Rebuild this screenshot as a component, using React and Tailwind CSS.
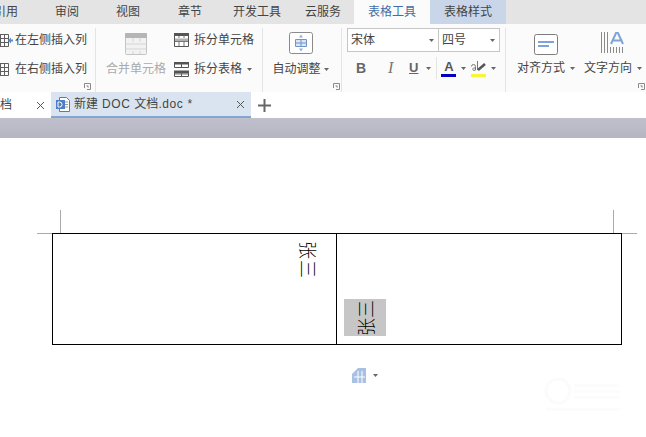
const FONT = "font-['Liberation_Sans','Noto_Sans_CJK_SC',sans-serif]";

const Caret = ({ className = '' }) => (
  <svg width="5" height="3" viewBox="0 0 5 3" className={`shrink-0 ${className}`}>
    <path d="M0 0h5L2.5 3z" fill="#666" />
  </svg>
);

const Launcher = () => (
  <svg width="7" height="7" viewBox="0 0 7 7" className="absolute right-[1px] bottom-[2px]">
    <path d="M.5 5V.5H6.500V6.500H3" fill="none" stroke="#8a8a8a" />
    <path d="M2 2.500h2.500V5z" fill="#8a8a8a" />
  </svg>
);

const Divider = ({ className = '' }) => <div className={`w-px h-[64px] bg-[#e4e4e4] shrink-0 ${className}`} />;

const TopTab = ({ w, children, className = 'text-[#444]' }) => (
  <div className={`h-full flex items-center justify-center shrink-0 text-[12px] ${className}`} style={{ width: w }}>
    {children}
  </div>
);

const GridIcon = ({ side }) => (
  <svg width="18" height="15" viewBox="0 0 18 15" className="shrink-0">
    <g fill="none" stroke="#5f5f5f">
      <path d="M.5 1.500h12v12H.5zM4.500 1.500v12M8.500 1.500v12M.5 5.500h12M.5 9.500h12" />
    </g>
    {side === 'left' && <path d="M12 7.500l3-3v2h2v2h-2v2z" fill="#5b8bc9" />}
  </svg>
);

const SplitCell = () => (
  <svg width="15" height="14" viewBox="0 0 15 14">
    <path d="M.5.5h14v13H.5z" fill="#fff" stroke="#555" />
    <path d="M0 0h15v3H0z" fill="#555" />
    <path d="M1 5.500h13v3H1z" fill="#b0b0b0" />
    <path d="M5 3v2M10 3v2M5 9v4M10 9v4M1 8.500h13" stroke="#777" />
  </svg>
);

const SplitTable = () => (
  <svg width="15" height="15" viewBox="0 0 15 15">
    <path d="M.5.5h14v5H.5zM.5 9.500h14v5H.5z" fill="#fff" stroke="#555" />
    <path d="M0 0h15v2H0zM0 9h15v2H0zM7.500 0v5M7.500 9v6" stroke="#555" fill="#555" />
    <path d="M1 12h13" stroke="#777" />
  </svg>
);

const MergeIcon = () => (
  <svg width="22" height="22" viewBox="0 0 22 22">
    <rect x=".5" y=".5" width="21" height="21" rx="1" fill="#f2f2f2" stroke="#c4c4c4" />
    <path d="M0 1a1 1 0 011-1h20a1 1 0 011 1v4H0z" fill="#b5b5b5" />
    <path d="M1 11h20M1 16h20M8 5v4M15 5v4M8 18v3M15 18v3" stroke="#d4d4d4" />
  </svg>
);

const AutoFitIcon = () => (
  <svg width="24" height="22" viewBox="0 0 24 22">
    <rect x=".5" y=".5" width="23" height="21" rx="2" fill="#fff" stroke="#8a8a8a" />
    <path d="M6.500 7.500h11v7h-11zM12 7.500v7M6.500 11h11" fill="#dbe6f5" stroke="#6f94c8" />
    <path d="M12 2.500l2 3h-4zM12 19.500l2-3h-4z" fill="#8fb0dc" />
  </svg>
);

const AlignIcon = () => (
  <svg width="24" height="21" viewBox="0 0 24 21">
    <rect x=".5" y=".5" width="23" height="20" rx="2" fill="#fff" stroke="#7d7d7d" />
    <path d="M4 8h16M4 12h11" stroke="#7ea3da" strokeWidth="2" />
  </svg>
);

const TextDirIcon = () => (
  <svg width="24" height="22" viewBox="0 0 24 22">
    <path d="M.5 0v21M3.500 0v21M6.500 0v21M9.500 15v6M12.500 15v6M15.500 15v6M18.500 15v6M21.500 15v6" stroke="#8a8a8a" />
    <path d="M10 12L15.500 0h1L22 12M12 8.500h8.500" fill="none" stroke="#7ea3da" strokeWidth="2" />
  </svg>
);

const DocIcon = () => (
  <svg width="14" height="15" viewBox="0 0 14 15" className="shrink-0">
    <path d="M3.500.5h7l3 3v11h-10z" fill="#fff" stroke="#777" />
    <path d="M9 5h3M9 7.500h3M9 10h3" stroke="#999" />
    <rect x="0" y="3" width="9" height="9" fill="#4f7fc4" />
    <path d="M2 5v5h1.500a2 2 0 000-5z" fill="none" stroke="#fff" />
  </svg>
);

const CloseX = () => (
  <svg width="9" height="9" viewBox="0 0 9 9">
    <path d="M1 1l7 7M8 1L1 8" stroke="#555" />
  </svg>
);

export default function App() {
  return (
    <div className={`w-[646px] h-[437px] overflow-hidden bg-white flex flex-col ${FONT}`}>
      {/* menu tabs */}
      <div className="h-[24px] bg-[#e4e4e4] flex items-center shrink-0 -ml-[6px]">
        <TopTab w={24}>引用</TopTab>
        <div className="w-[19px]" />
        <TopTab w={60}>审阅</TopTab>
        <TopTab w={62}>视图</TopTab>
        <TopTab w={62}>章节</TopTab>
        <TopTab w={72}>开发工具</TopTab>
        <TopTab w={60}>云服务</TopTab>
        <div className="w-[1px]" />
        <TopTab w={76} className="bg-[#fbfbfb] text-[#3f6ea8]">表格工具</TopTab>
        <TopTab w={76} className="bg-[#c9d5e8] text-[#444]">表格样式</TopTab>
      </div>

      {/* ribbon */}
      <div className="h-[68px] bg-[#fbfbfb] flex shrink-0 text-[12px] text-[#444] pt-[4px]">
        <div className="relative w-[95px] h-[64px] shrink-0 pl-[15px] flex flex-col pt-[4px] gap-[13px]">
          <div className="flex items-center h-[16px] relative">
            <div className="absolute -left-[19px]"><GridIcon side="left" /></div>
            在左侧插入列
          </div>
          <div className="flex items-center h-[16px] relative">
            <div className="absolute -left-[19px]"><GridIcon /></div>
            在右侧插入列
          </div>
          <div className="absolute right-[3px] bottom-0 w-[7px] h-[9px]"><Launcher /></div>
        </div>
        <Divider />

        <div className="w-[166px] shrink-0 flex">
          <div className="w-[78px] flex flex-col items-center pl-[2px] pt-[5px] text-[#aaa]">
            <MergeIcon />
            <div className="mt-[5px] whitespace-nowrap">合并单元格</div>
          </div>
          <div className="flex flex-col pt-[3px] gap-[11px]">
            <div className="flex items-center gap-[5px] h-[18px] whitespace-nowrap"><SplitCell />拆分单元格</div>
            <div className="flex items-center gap-[5px] h-[18px] whitespace-nowrap">
              <SplitTable />拆分表格<Caret />
            </div>
          </div>
        </div>
        <Divider />

        <div className="relative w-[78px] shrink-0 h-[64px] flex flex-col items-center pt-[4px] pr-[3px]">
          <AutoFitIcon />
          <div className="mt-[6px] flex items-center gap-[3px] whitespace-nowrap">自动调整<Caret /></div>
          <Launcher />
        </div>
        <Divider />

        <div className="w-[163px] shrink-0 flex flex-col pl-[5px]">
          <div className="w-[153px] h-[24px] border border-[#c6c6c6] bg-white flex items-center">
            <div className="w-[91px] h-full flex items-center justify-between pl-[3px] pr-[4px] border-r border-[#c6c6c6]">
              宋体<Caret />
            </div>
            <div className="flex-1 flex items-center justify-between pl-[3px] pr-[4px]">四号<Caret /></div>
          </div>
          <div className="flex items-center h-[24px] mt-[4px]">
            <span className="w-[32px] ml-[9px] font-bold text-[14px] text-[#666]">B</span>
            <span className="w-[21px] italic text-[16px] text-[#777] font-['Liberation_Serif',serif]">I</span>
            <span className="underline font-bold text-[13px] text-[#666]">U</span>
            <Caret className="ml-[8px]" />
            <div className="w-px h-[22px] bg-[#e4e4e4] ml-[5px]" />
            <div className="flex flex-col items-center ml-[4px] w-[15px]">
              <span className="font-bold text-[13px] leading-[13px] text-[#555]">A</span>
              <div className="w-[15px] h-[3px] bg-[#0000c0] mt-[1px]" />
            </div>
            <Caret className="ml-[5px]" />
            <div className="flex flex-col items-center ml-[5px] w-[15px]">
              <svg width="15" height="13" viewBox="0 0 15 13">
                <path d="M4.500 10V6.500a2 2 0 00-4 0M4.500 8H2.500a1.500 1.500 0 000 2.500l2-.5" fill="none" stroke="#777" />
                <path d="M6.500 1v9" stroke="#777" />
                <path d="M7 10l7-6" stroke="#555" strokeWidth="2.500" />
              </svg>
              <div className="w-[15px] h-[3px] bg-[#f5f53c] mt-[1px]" />
            </div>
            <Caret className="ml-[5px]" />
          </div>
        </div>
        <Divider />

        <div className="relative flex-1 h-[64px] flex">
          <div className="w-[78px] flex flex-col items-center pl-[11px] pr-[9px] pt-[6px] shrink-0">
            <AlignIcon />
            <div className="mt-[4px] flex items-center gap-[5px] whitespace-nowrap">对齐方式<Caret /></div>
          </div>
          <div className="w-[58px] flex flex-col items-center pt-[4px] shrink-0">
            <TextDirIcon />
            <div className="mt-[5px] flex items-center gap-[5px] whitespace-nowrap">文字方向<Caret /></div>
          </div>
          <Launcher />
        </div>
      </div>

      {/* document tabs */}
      <div className="h-[26px] bg-white flex shrink-0 text-[12px] text-[#444]">
        <div className="w-[51px] flex items-center justify-between pr-[6px]">
          <span>档</span><CloseX />
        </div>
        <div className="w-[200px] h-full bg-[#dae4f1] border-b-2 border-[#84a5d2] flex items-center pl-[5px] pr-[6px]">
          <DocIcon />
          <span className="ml-[4px] flex-1 whitespace-nowrap">
            新建<span className="tracking-[0.6px]"> DOC </span>文档<span className="tracking-[0.6px]">.doc *</span>
          </span>
          <CloseX />
        </div>
        <div className="ml-[7px] flex items-center">
          <svg width="13" height="13" viewBox="0 0 13 13"><path d="M6.500 0v13M0 6.500h13" stroke="#666" strokeWidth="2" /></svg>
        </div>
      </div>

      {/* gray band above the page */}
      <div className="h-[20px] shrink-0 bg-gradient-to-b from-[#bfc0cb] to-[#b4b5c0]" />

      {/* page */}
      <div className="relative flex-1 bg-white pt-[95px] pl-[52px]">
        <div className="absolute left-[60px] top-[72px] w-px h-[23px] bg-[#aaa]" />
        <div className="absolute left-[37px] top-[95px] w-[15px] h-px bg-[#aaa]" />
        <div className="absolute left-[613px] top-[72px] w-px h-[23px] bg-[#aaa]" />
        <div className="absolute left-[622px] top-[95px] w-[15px] h-px bg-[#aaa]" />

        <div className="w-[570px] h-[112px] border border-black flex">
          <div className="w-[284px] border-r border-black flex justify-end pr-[18px] pt-[7px] shrink-0">
            <div className="w-[18px] h-[38px] flex items-center justify-center">
              <span className="rotate-90 whitespace-nowrap text-[18px] tracking-[1px] leading-none text-black font-light font-['Noto_Sans_CJK_SC',sans-serif]">张三</span>
            </div>
          </div>
          <div className="flex-1 flex items-end pl-[7px] pb-[8px]">
            <div className="w-[42px] h-[37px] bg-[#c6c6c6] flex items-center justify-center">
              <span className="-rotate-90 whitespace-nowrap text-[18px] leading-none text-black font-light font-['Noto_Sans_CJK_SC',sans-serif]">张三</span>
            </div>
          </div>
        </div>

        <div className="ml-[300px] mt-[23px] flex items-center gap-[7px]">
          <svg width="14" height="15" viewBox="0 0 14 15">
            <path d="M0 15V6l6-6h8v15z" fill="#a9c0e2" />
            <path d="M6 3v12M10 3v12M2 9h11" stroke="#fff" />
          </svg>
          <Caret />
        </div>

        {/* faint watermark */}
        <svg width="78" height="36" viewBox="0 0 78 36" className="absolute left-[544px] top-[240px]">
          <circle cx="14" cy="13" r="12" fill="none" stroke="#fbfbfb" strokeWidth="3" />
          <path d="M30 6h46v3H30zM30 12h46v3H30zM30 18h46v3H30zM2 30h74v3H2z" fill="#fcfcfc" />
        </svg>
      </div>
    </div>
  );
}
